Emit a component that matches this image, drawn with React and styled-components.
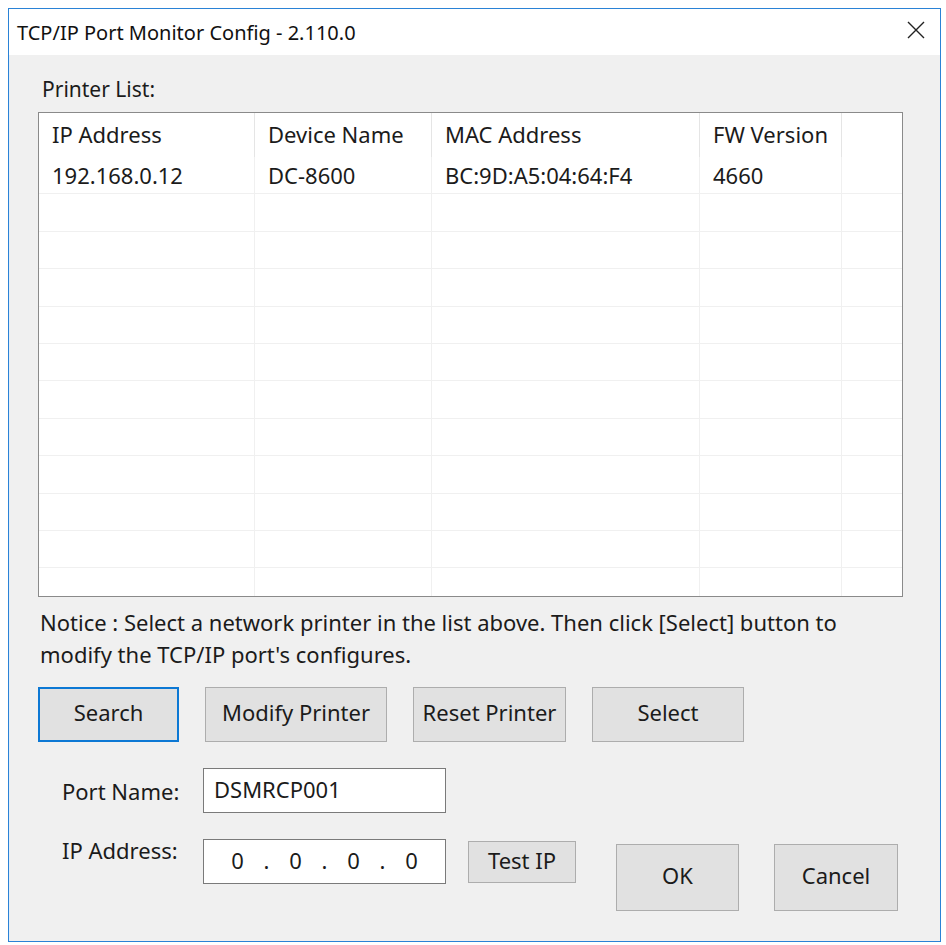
import styled, { createGlobalStyle } from "styled-components";

const GlobalStyle = createGlobalStyle`
  body {
    margin: 0;
    background: #ffffff;
    font-family: "Noto Sans", "Open Sans", sans-serif;
    font-size: 22px;
    color: #1b1b1b;
  }
`;

const columns = [
  { title: "IP Address", width: 216 },
  { title: "Device Name", width: 177 },
  { title: "MAC Address", width: 268 },
  { title: "FW Version", width: 142 },
  { title: "", width: null },
];

const printers = [
  ["192.168.0.12", "DC-8600", "BC:9D:A5:04:64:F4", "4660", ""],
];

const EMPTY_ROWS = 12;

const App = () => {
  const rows = [...printers];
  while (rows.length < EMPTY_ROWS) rows.push(["", "", "", "", ""]);

  return (
    <>
      <GlobalStyle />
      <Window>
        <TitleBar>
          <span>TCP/IP Port Monitor Config - 2.110.0</span>
          <CloseIcon viewBox="0 0 18 18">
            <path d="M1 1 L17 17 M17 1 L1 17" />
          </CloseIcon>
        </TitleBar>

        <Body>
          <SectionLabel>Printer List:</SectionLabel>
          <ListView>
            <HeaderRow>
              {columns.map((col, i) => (
                <HeaderCell key={i}>{col.title}</HeaderCell>
              ))}
            </HeaderRow>
            {rows.map((row, r) => (
              <ListRow key={r}>
                {row.map((cell, c) => (
                  <ListCell key={c}>{cell}</ListCell>
                ))}
              </ListRow>
            ))}
          </ListView>

          <Notice>
            Notice : Select a network printer in the list above. Then click
            [Select] button to
            <br />
            modify the TCP/IP port's configures.
          </Notice>

          <ButtonRow>
            <Button $w={141} $h={55} $focused>
              Search
            </Button>
            <Button $w={182} $h={55}>
              Modify Printer
            </Button>
            <Button $w={153} $h={55}>
              Reset Printer
            </Button>
            <Button $w={152} $h={55}>
              Select
            </Button>
          </ButtonRow>

          <FormRow>
            <FieldLabel>Port Name:</FieldLabel>
            <TextBox>DSMRCP001</TextBox>
          </FormRow>

          <IpRow>
            <FieldLabel>IP Address:</FieldLabel>
            <IpBox>
              <Octet>0</Octet>
              <Dot>.</Dot>
              <Octet>0</Octet>
              <Dot>.</Dot>
              <Octet>0</Octet>
              <Dot>.</Dot>
              <Octet>0</Octet>
            </IpBox>
            <Button $w={108} $h={42} $top={7} $left={22}>
              Test IP
            </Button>
            <Button $w={123} $h={67} $top={10} $left={40}>
              OK
            </Button>
            <Button $w={124} $h={67} $top={10} $left={35}>
              Cancel
            </Button>
          </IpRow>
        </Body>
      </Window>
    </>
  );
};

export default App;

const Window = styled.div`
  margin: 8px;
  width: 933px;
  height: 934px;
  box-sizing: border-box;
  border: 1px solid #2a82d6;
  background: #f0f0f0;
  display: flex;
  flex-direction: column;
  box-shadow: inset 1px 0 0 #e4eef8;
`;

const TitleBar = styled.div`
  height: 46px;
  flex-shrink: 0;
  background: #ffffff;
  display: flex;
  align-items: center;
  justify-content: space-between;
  padding: 0 15px 0 8px;
  font-size: 20px;
  color: #111;
`;

const CloseIcon = styled.svg`
  width: 18px;
  height: 18px;
  margin-top: -4px;
  fill: none;
  stroke: #222;
  stroke-width: 1.4;
`;

const Body = styled.div`
  padding: 18px 0 0 29px;
  display: flex;
  flex-direction: column;
`;

const SectionLabel = styled.div`
  font-size: 21px;
  line-height: 32px;
  padding-left: 4px;
  margin-bottom: 7px;
`;

const ListView = styled.div`
  width: 865px;
  height: 485px;
  box-sizing: border-box;
  border: 1px solid #8a8a8a;
  background: #ffffff;
  overflow: hidden;
`;

const gridColumns = columns
  .map((c) => (c.width ? `${c.width}px` : "1fr"))
  .join(" ");

const HeaderRow = styled.div`
  display: grid;
  grid-template-columns: ${gridColumns};
  height: 44px;
`;

const HeaderCell = styled.div`
  display: flex;
  align-items: center;
  padding-left: 13px;
  padding-bottom: 2px;
  border-right: 1px solid #e5e5e5;
  white-space: nowrap;

  &:last-child {
    border-right: none;
  }
`;

const ListRow = styled.div`
  display: grid;
  grid-template-columns: ${gridColumns};
  height: 37.4px;
  box-sizing: border-box;
  border-bottom: 1px solid #f0f0f0;
`;

const ListCell = styled.div`
  display: flex;
  align-items: center;
  padding-left: 13px;
  border-right: 1px solid #f0f0f0;
  white-space: nowrap;

  &:last-child {
    border-right: none;
  }
`;

const Notice = styled.div`
  margin-top: 9px;
  padding-left: 2px;
  line-height: 32px;
  white-space: nowrap;
`;

const ButtonRow = styled.div`
  display: flex;
  gap: 26px;
  margin-top: 17px;
`;

const Button = styled.button`
  width: ${(p) => p.$w}px;
  height: ${(p) => p.$h}px;
  margin-top: ${(p) => p.$top || 0}px;
  margin-left: ${(p) => p.$left || 0}px;
  flex-shrink: 0;
  box-sizing: border-box;
  background: #e1e1e1;
  border: ${(p) => (p.$focused ? "2px solid #0c78d4" : "1px solid #adadad")};
  font-family: inherit;
  font-size: 22px;
  color: #1b1b1b;
  padding: 0 0 5px 0;
`;

const FormRow = styled.div`
  display: flex;
  align-items: center;
  margin-top: 26px;
  padding-left: 24px;
`;

const IpRow = styled.div`
  display: flex;
  align-items: flex-start;
  margin-top: 21px;
  padding-left: 24px;
`;

const FieldLabel = styled.div`
  width: 141px;
  flex-shrink: 0;
  line-height: 32px;
`;

const TextBox = styled.div`
  width: 243px;
  height: 45px;
  box-sizing: border-box;
  border: 1px solid #7a7a7a;
  background: #ffffff;
  display: flex;
  align-items: center;
  padding-left: 10px;
  padding-bottom: 4px;
`;

const IpBox = styled(TextBox)`
  margin-top: 5px;
  justify-content: center;
  padding: 0 0 4px 0;
`;

const Octet = styled.span`
  width: 22px;
  text-align: center;
`;

const Dot = styled.span`
  width: 36px;
  text-align: center;
`;
